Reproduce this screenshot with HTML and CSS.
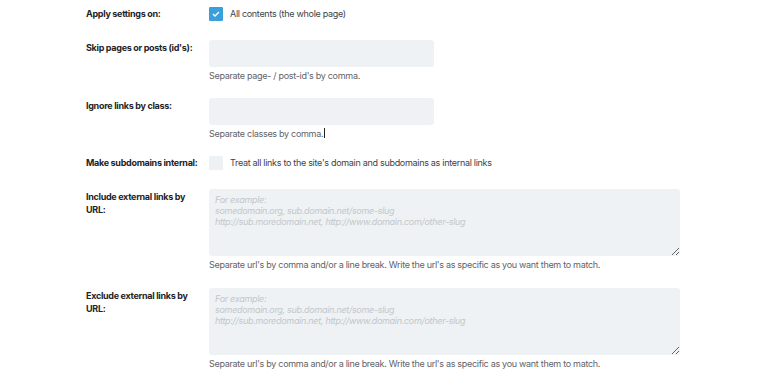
FILE: index.html
```html
<!DOCTYPE html>
<html lang="en">
<head>
    <meta charset="UTF-8">
    <meta name="viewport" content="width=device-width, initial-scale=1.0">
    <title>Link settings</title>
    <link rel="stylesheet" href="styles.css">
</head>
<body>
    <div class="settings">
        <div class="row row-check">
            <div class="label">Apply settings on:</div>
            <div class="field">
                <label class="check">
                    <span class="box checked">
                        <svg width="8" height="6" viewBox="0 0 8 6"><path d="M1 3l2 2 4-4" fill="none" stroke="#fff" stroke-width="1.3"/></svg>
                    </span>
                    All contents (the whole page)
                </label>
            </div>
        </div>
        <div class="row">
            <div class="label">Skip pages or posts (id's):</div>
            <div class="field">
                <input class="text-input" type="text">
                <p class="help">Separate page- / post-id's by comma.</p>
            </div>
        </div>
        <div class="row">
            <div class="label">Ignore links by class:</div>
            <div class="field">
                <input class="text-input" type="text">
                <p class="help">Separate classes by comma.<span class="caret"></span></p>
            </div>
        </div>
        <div class="row row-check">
            <div class="label">Make subdomains internal:</div>
            <div class="field">
                <label class="check">
                    <span class="box"></span>
                    Treat all links to the site's domain and subdomains as internal links
                </label>
            </div>
        </div>
        <div class="row row-area">
            <div class="label">Include external links by URL:</div>
            <div class="field">
                <textarea class="text-area" placeholder="For example:&#10;somedomain.org, sub.domain.net/some-slug&#10;http://sub.moredomain.net, http://www.domain.com/other-slug"></textarea>
                <p class="help">Separate url's by comma and/or a line break. Write the url's as specific as you want them to match.</p>
            </div>
        </div>
        <div class="row row-area">
            <div class="label">Exclude external links by URL:</div>
            <div class="field">
                <textarea class="text-area" placeholder="For example:&#10;somedomain.org, sub.domain.net/some-slug&#10;http://sub.moredomain.net, http://www.domain.com/other-slug"></textarea>
                <p class="help">Separate url's by comma and/or a line break. Write the url's as specific as you want them to match.</p>
            </div>
        </div>
    </div>
</body>
</html>
```

FILE: styles.css
```css
body {
    margin: 0;
    background-color: #fff;
    font-family: Inter, "Open Sans", sans-serif;
    font-size: 9px;
    letter-spacing: -0.3px;
    color: #50575e;
}
.settings {
    padding: 0 0 0 86px;
}
.row {
    display: flex;
    gap: 8px;
    padding: 8px 0 8px;
}
.row-check {
    padding-bottom: 11px;
}
.row-area {
    padding-bottom: 9px;
}
.row:first-child {
    padding-top: 7px;
}
.label {
    width: 115px;
    flex-shrink: 0;
    font-weight: 700;
    color: #1d2327;
    line-height: 13px;
    padding-top: 1px;
}
.row-check .label {
    padding-top: 0;
    line-height: 14px;
}
.field {
    flex: 1;
}
.check {
    display: flex;
    align-items: center;
    gap: 7px;
    color: #3c434a;
    line-height: 14px;
}
.box {
    width: 14px;
    height: 14px;
    border-radius: 1px;
    background-color: #eef1f4;
    display: flex;
    align-items: center;
    justify-content: center;
}
.box.checked {
    background-color: #3a9fdb;
}
.text-input {
    display: block;
    box-sizing: border-box;
    width: 225px;
    height: 27px;
    margin: 0;
    border: none;
    border-radius: 3px;
    background-color: #eef2f4;
}
.text-area {
    display: block;
    width: 471px;
    height: 67px;
    margin: 0;
    padding: 5px 6px;
    box-sizing: border-box;
    border: none;
    border-radius: 3px;
    background-color: #eef2f4;
    font-family: inherit;
    font-size: 9px;
    font-style: italic;
    letter-spacing: -0.3px;
    line-height: 11px;
    color: #555;
}
.text-area::placeholder {
    color: #c3c7cb;
}
.help {
    margin: 3px 0 0;
    line-height: 12px;
    color: #5f6468;
}
.caret {
    display: inline-block;
    width: 1px;
    height: 10px;
    margin-left: 1px;
    vertical-align: -1px;
    background-color: #222;
}
```
